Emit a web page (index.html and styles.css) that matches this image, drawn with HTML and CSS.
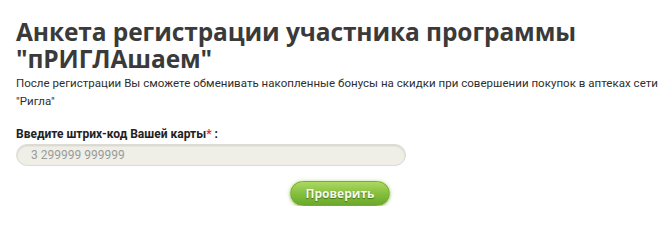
FILE: index.html
```html
<!DOCTYPE html>
<html lang="ru">
<head>
<meta charset="utf-8">
<link rel="stylesheet" href="styles.css">
</head>
<body>
<div class="page">
  <h1 class="title">Анкета регистрации участника программы "пРИГЛАшаем"</h1>
  <p class="intro">После регистрации Вы сможете обменивать накопленные бонусы на скидки при совершении покупок в аптеках сети "Ригла"</p>
  <form class="form">
    <label class="label" for="code">Введите штрих-код Вашей карты<span class="req">*</span> :</label>
    <input class="field" id="code" type="text" placeholder="3 299999 999999">
    <div class="actions">
      <button class="btn" type="button">Проверить</button>
    </div>
  </form>
</div>
</body>
</html>
```
FILE: styles.css
```css
html, body {
  margin: 0;
  padding: 0;
  background: #ffffff;
}
.page {
  padding: 18px 0 0 16px;
  font-family: "Roboto", "Open Sans", "Liberation Sans", sans-serif;
  color: #333333;
}
.title {
  margin: 0;
  font-family: "Open Sans", "Liberation Sans", sans-serif;
  font-size: 24.5px;
  line-height: 27px;
  font-weight: 700;
  color: #3a3a3a;
  letter-spacing: -0.1px;
  width: 600px;
}
.intro {
  margin: 2px 0 0;
  font-size: 11.5px;
  line-height: 18px;
  letter-spacing: 0.03px;
  color: #2e2e2e;
}
.form {
  margin-top: 16px;
  display: flex;
  flex-direction: column;
}
.label {
  font-size: 12px;
  font-weight: 700;
  line-height: 16px;
  color: #222222;
}
.req {
  color: #e0302f;
}
.field {
  margin-top: 2px;
  width: 390px;
  height: 22px;
  box-sizing: border-box;
  border: 1px solid #dcdcd4;
  border-radius: 11px;
  background: #efefe8;
  box-shadow: inset 0 1px 2px rgba(0,0,0,0.12);
  padding: 0 14px;
  font-family: "Roboto", "Open Sans", "Liberation Sans", sans-serif;
  font-size: 12px;
  color: #888888;
  outline: none;
}
.field::placeholder {
  color: #9a9a9a;
}
.actions {
  width: 390px;
  display: flex;
  justify-content: flex-end;
  padding-right: 16px;
  box-sizing: border-box;
  margin-top: 15px;
}
.btn {
  width: 100px;
  height: 25px;
  border: 1px solid #78ad2c;
  border-radius: 13px;
  background: linear-gradient(#acd862, #86bf3e 50%, #6aa92a);
  box-shadow: 0 1px 3px rgba(70,110,20,0.35), 0 0 4px rgba(190,225,130,0.6);
  color: #f4fae6;
  font-family: "Open Sans", "Liberation Sans", sans-serif;
  font-weight: 700;
  font-size: 12px;
  text-shadow: 0 1px 1px rgba(50,80,15,0.7);
  cursor: pointer;
}
```
